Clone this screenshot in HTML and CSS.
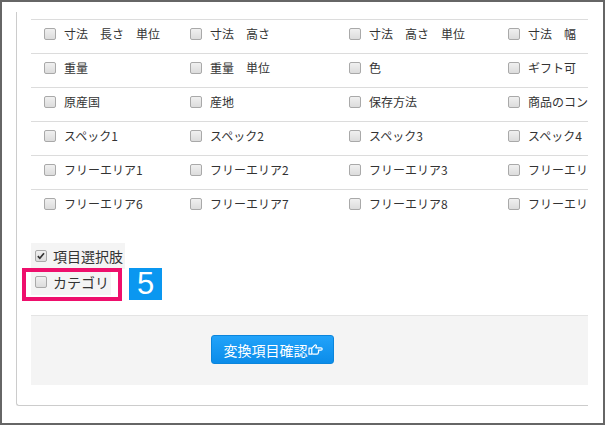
FILE: index.html
```html
<!DOCTYPE html>
<html lang="ja">
<head>
<meta charset="utf-8">
<link rel="stylesheet" href="styles.css">
</head>
<body>
<div class="frame">
  <div class="panel">
    <div class="grid">
      <div class="row">
        <div class="cell"><span class="cb"></span>寸法　長さ　単位</div>
        <div class="cell"><span class="cb"></span>寸法　高さ</div>
        <div class="cell"><span class="cb"></span>寸法　高さ　単位</div>
        <div class="cell"><span class="cb"></span>寸法　幅</div>
      </div>
      <div class="row">
        <div class="cell"><span class="cb"></span>重量</div>
        <div class="cell"><span class="cb"></span>重量　単位</div>
        <div class="cell"><span class="cb"></span>色</div>
        <div class="cell"><span class="cb"></span>ギフト可</div>
      </div>
      <div class="row">
        <div class="cell"><span class="cb"></span>原産国</div>
        <div class="cell"><span class="cb"></span>産地</div>
        <div class="cell"><span class="cb"></span>保存方法</div>
        <div class="cell"><span class="cb"></span>商品のコン</div>
      </div>
      <div class="row">
        <div class="cell"><span class="cb"></span>スペック1</div>
        <div class="cell"><span class="cb"></span>スペック2</div>
        <div class="cell"><span class="cb"></span>スペック3</div>
        <div class="cell"><span class="cb"></span>スペック4</div>
      </div>
      <div class="row">
        <div class="cell"><span class="cb"></span>フリーエリア1</div>
        <div class="cell"><span class="cb"></span>フリーエリア2</div>
        <div class="cell"><span class="cb"></span>フリーエリア3</div>
        <div class="cell"><span class="cb"></span>フリーエリ</div>
      </div>
      <div class="row">
        <div class="cell"><span class="cb"></span>フリーエリア6</div>
        <div class="cell"><span class="cb"></span>フリーエリア7</div>
        <div class="cell"><span class="cb"></span>フリーエリア8</div>
        <div class="cell"><span class="cb"></span>フリーエリ</div>
      </div>
    </div>

    <div class="opts">
      <div class="opt"><span class="cb small"><svg viewBox="0 0 12 12" width="10" height="10"><path d="M2.2 6.2 L4.6 8.8 L9.6 2.6" fill="none" stroke="#333" stroke-width="2"/></svg></span>項目選択肢</div>
      <div class="opt"><span class="cb small"></span>カテゴリ</div>
      <div class="mark"></div>
      <div class="badge">5</div>
    </div>

    <div class="actions">
      <button class="btn">変換項目確認<svg class="hand" viewBox="0 0 16 14" width="15" height="13"><path d="M1 5.6 H4 V12 H1 Z M4 5.8 L7 2.6 Q7.9 1.7 8.7 2.4 Q9.3 3 8.8 4 L8.3 5.2 H14 Q15.2 5.2 15.2 6.4 Q15.2 7.6 14 7.6 H11 Q11.9 8.2 11.2 9.2 Q11.7 10.1 10.8 10.8 Q10.9 12 9.8 12 H6 Q4.8 12 4 11.2 Z" fill="none" stroke="#fff" stroke-width="1.3" stroke-linejoin="round"/></svg></button>
    </div>
  </div>
</div>
</body>
</html>
```

FILE: styles.css
```css
html, body {
  margin: 0;
  padding: 0;
  background: #fff;
}
body {
  font-family: "Noto Sans CJK JP", "Noto Sans", sans-serif;
  color: #333;
}
.frame {
  width: 605px;
  height: 425px;
  box-sizing: border-box;
  border: 2px solid #666;
  background: #fff;
  overflow: hidden;
  padding: 10px 15px 0 14px;
}
.panel {
  height: 394px;
  box-sizing: border-box;
  border-left: 1px solid #ccc;
  border-bottom: 1px solid #ccc;
  border-bottom-left-radius: 3px;
  padding: 7px 0 0 14px;
  overflow: hidden;
}
.row {
  display: grid;
  grid-template-columns: 146px 159px 159px 93px;
  height: 34px;
  box-sizing: border-box;
  border-top: 1px solid #dcdcdc;
}
.cell {
  display: flex;
  align-items: center;
  padding: 4px 0 0 13px;
  height: 20px;
  font-size: 12px;
  line-height: 20px;
  white-space: nowrap;
  overflow: hidden;
}
.cb {
  flex: none;
  width: 12px;
  height: 12px;
  box-sizing: border-box;
  border: 1px solid #a9a9a9;
  border-radius: 2px;
  background: linear-gradient(#f0f0f0, #dcdcdc);
  margin-right: 8px;
  display: flex;
  align-items: center;
  justify-content: center;
}
.cb.small {
  margin-right: 6px;
}
.opts {
  position: relative;
  margin-top: 20px;
  display: flex;
  flex-direction: column;
  align-items: flex-start;
}
.opt {
  display: flex;
  align-items: center;
  height: 26px;
  padding: 0 2px 0 4px;
  background: #f4f4f4;
  font-size: 14px;
  line-height: 20px;
  white-space: nowrap;
}
.mark {
  position: absolute;
  left: -9px;
  top: 25px;
  width: 100px;
  height: 33px;
  box-sizing: border-box;
  border: 4px solid #ee0f6c;
}
.badge {
  position: absolute;
  left: 98px;
  top: 25px;
  width: 33px;
  height: 32px;
  background: #0a97f0;
  color: #fff;
  font-family: "Liberation Sans", Arial, sans-serif;
  font-size: 31px;
  line-height: 32px;
  text-align: center;
}
.actions {
  margin-top: 20px;
  height: 70px;
  box-sizing: border-box;
  background: #f4f4f4;
  border-top: 1px solid #e4e4e4;
  padding: 19px 0 0 180px;
}
.btn {
  display: flex;
  align-items: center;
  justify-content: center;
  width: 123px;
  height: 29px;
  box-sizing: border-box;
  padding: 0 0 0 1px;
  border: 1px solid #0b85dc;
  border-radius: 3px;
  background: linear-gradient(#22a3fa, #0b8ce9);
  color: #fff;
  font-family: "Noto Sans CJK JP", sans-serif;
  font-size: 14px;
  line-height: 20px;
}
```
